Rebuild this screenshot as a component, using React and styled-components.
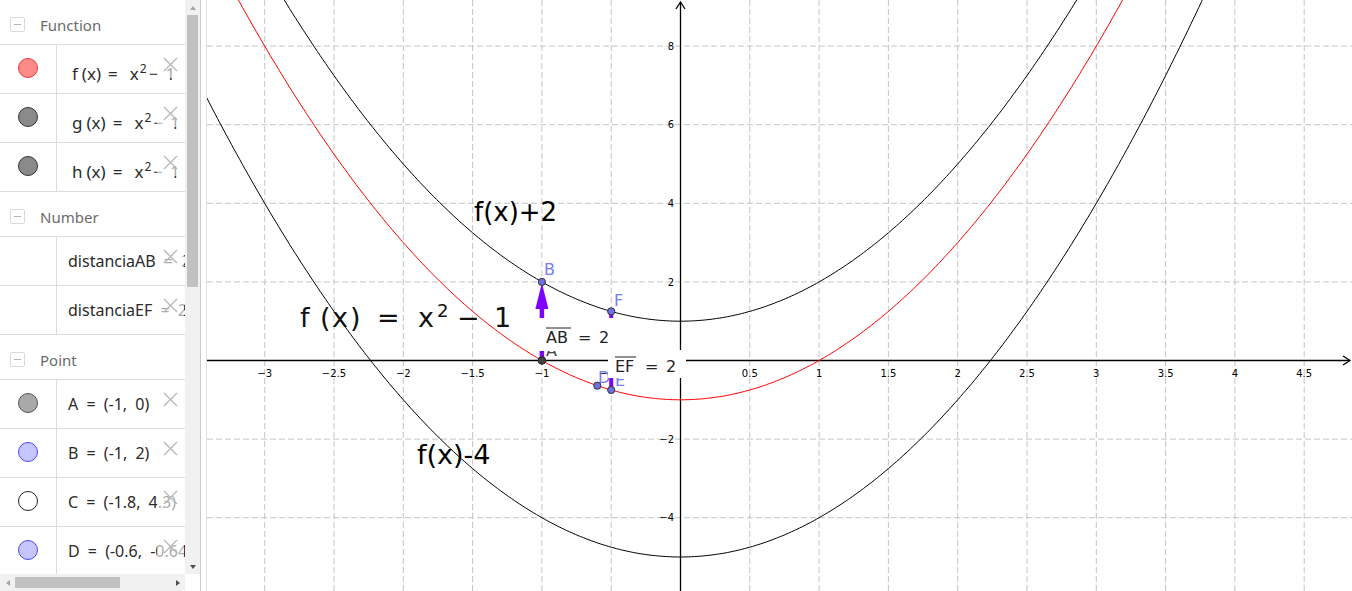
import React from 'react';
import styled, { createGlobalStyle } from 'styled-components';

const GlobalStyle = createGlobalStyle`
  html, body { margin: 0; padding: 0; background: #fff; overflow: hidden; }
  #root { width: 1352px; height: 591px; }
`;

const Page = styled.div`
  display: flex;
  width: 1352px;
  height: 591px;
  font-family: "Noto Sans", "DejaVu Sans", sans-serif;
  background: #fff;
`;

const AlgebraPanel = styled.div`
  flex: none;
  width: 201px;
  box-sizing: border-box;
  border-right: 1px solid #c9c9c9;
  display: grid;
  grid-template-columns: 185px 15px;
  grid-template-rows: 574px 17px;
`;

const AlgebraContent = styled.div`
  overflow: hidden;
`;

const AlgebraList = styled.div`
  width: 185px;
`;

const GroupHeader = styled.div`
  height: 45px;
  box-sizing: border-box;
  border-bottom: 1px solid #dcdcdc;
  display: flex;
  align-items: center;
  padding: 5px 0 0 10px;
`;

const CollapseIcon = styled.div`
  width: 15px;
  height: 15px;
  box-sizing: border-box;
  border: 1px solid #dadada;
  border-radius: 2px;
  display: flex;
  align-items: center;
  justify-content: center;
  margin-right: 15px;
  &::after {
    content: "";
    width: 7px;
    height: 1px;
    background: #b4b4b4;
  }
`;

const GroupTitle = styled.span`
  font-size: 15px;
  color: #6b6b6b;
`;

const Row = styled.div`
  position: relative;
  height: 49px;
  box-sizing: border-box;
  border-bottom: 1px solid #dcdcdc;
  display: flex;
  overflow: hidden;
`;

const MarbleCell = styled.div`
  flex: none;
  width: 57px;
  box-sizing: border-box;
  border-right: 1px solid #dcdcdc;
  display: flex;
  align-items: center;
  justify-content: center;
  padding-bottom: 3px;
`;

const Marble = styled.div`
  width: 20px;
  height: 20px;
  box-sizing: border-box;
  border-radius: 50%;
  border: 1px solid ${p => p.$border};
  background: ${p => p.$fill};
`;

const RowText = styled.div`
  display: flex;
  align-items: center;
  padding-left: ${p => (p.$math ? 15 : 11)}px;
  padding-top: ${p => (p.$math ? 8 : 0)}px;
  font-size: ${p => (p.$math ? 17 : 16)}px;
  word-spacing: 4px;
  color: #2b2b2b;
  white-space: pre;
`;

const MathPiece = styled.span`
  margin-left: ${p => p.$gap || 0}px;
  word-spacing: normal;
`;

const Sup = styled.span`
  font-size: 12px;
  position: relative;
  top: -7px;
  margin-left: 1px;
`;

const DeleteButton = styled.div`
  position: absolute;
  left: 157px;
  top: 6px;
  width: 27px;
  height: 27px;
  background: rgba(255, 255, 255, 0.6);
  display: flex;
  align-items: center;
  justify-content: center;
`;

const VScroll = styled.div`
  background: #f1f1f1;
  display: flex;
  flex-direction: column;
  align-items: center;
`;

const HScroll = styled.div`
  background: #f1f1f1;
  display: flex;
  align-items: center;
`;

const ScrollCorner = styled.div`
  background: #fff;
`;

const ArrowBox = styled.div`
  flex: none;
  width: 15px;
  height: 15px;
  display: flex;
  align-items: center;
  justify-content: center;
`;

const Tri = styled.div`
  width: 0;
  height: 0;
  ${p => p.$dir === 'up' && `border-left:3.5px solid transparent;border-right:3.5px solid transparent;border-bottom:4px solid ${p.$c};`}
  ${p => p.$dir === 'down' && `border-left:3.5px solid transparent;border-right:3.5px solid transparent;border-top:4px solid ${p.$c};`}
  ${p => p.$dir === 'left' && `border-top:3.5px solid transparent;border-bottom:3.5px solid transparent;border-right:4px solid ${p.$c};`}
  ${p => p.$dir === 'right' && `border-top:3.5px solid transparent;border-bottom:3.5px solid transparent;border-left:4px solid ${p.$c};`}
`;

const VThumb = styled.div`
  flex: none;
  width: 11px;
  height: 272px;
  background: #c1c1c1;
`;

const HThumb = styled.div`
  flex: none;
  width: 105px;
  height: 11px;
  background: #c1c1c1;
`;

const Spacer = styled.div`
  flex: 1;
`;

const Divider = styled.div`
  flex: none;
  width: 6px;
  box-sizing: border-box;
  background: #fff;
  border-right: 1px solid #e2e2e2;
`;

const GraphicsView = styled.div`
  flex: 1;
  overflow: hidden;
  background: #fff;
`;

const GraphSvg = styled.svg`
  display: block;
`;

/* ---------- algebra data ---------- */

const CloseIcon = () => (
  <svg width="15" height="15" viewBox="0 0 15 15">
    <path d="M1 1 L14 14 M14 1 L1 14" stroke="#b8b8b8" strokeWidth="1.4" fill="none" />
  </svg>
);

const MathFn = ({ name, tail }) => (
  <>
    <MathPiece>{name}</MathPiece>
    <MathPiece $gap={4}>(x)</MathPiece>
    <MathPiece $gap={7}>=</MathPiece>
    <MathPiece $gap={12}>x<Sup>2</Sup></MathPiece>
    <MathPiece $gap={2}>−</MathPiece>
    <MathPiece $gap={7}>1{tail}</MathPiece>
  </>
);

const groups = [
  {
    title: 'Function',
    rows: [
      { fill: '#ff8a8a', border: '#e23b3b', math: true, content: <MathFn name="f" tail="" /> },
      { fill: '#8a8a8a', border: '#333', math: true, content: <MathFn name="g" tail=" + 2" /> },
      { fill: '#8a8a8a', border: '#333', math: true, content: <MathFn name="h" tail=" − 4" /> },
    ],
  },
  {
    title: 'Number',
    rows: [
      { content: 'distanciaAB = 2' },
      { content: 'distanciaEF = 2' },
    ],
  },
  {
    title: 'Point',
    rows: [
      { fill: '#a9a9a9', border: '#555', content: 'A = (-1, 0)' },
      { fill: '#c6c6ff', border: '#4a4ae6', content: 'B = (-1, 2)' },
      { fill: '#ffffff', border: '#222', content: 'C = (-1.8, 4.3)' },
      { fill: '#c6c6ff', border: '#4a4ae6', content: 'D = (-0.6, -0.64)' },
    ],
  },
];

/* ---------- graph helpers ---------- */

const X = x => 680.5 + 138.6 * x;
const Y = y => 360.5 - 39.3 * y;

const parabola = c => {
  let d = '';
  for (let i = 0; i <= 420; i++) {
    const x = -3.6 + i * 0.02;
    d += (i ? 'L' : 'M') + X(x).toFixed(1) + ' ' + Y(x * x + c).toFixed(1);
  }
  return d;
};

const fmt = v => (v < 0 ? '−' + String(-v) : String(v));

const xTicks = [];
for (let k = -6; k <= 9; k++) if (k !== 0) xTicks.push(k * 0.5);
const yTicks = [-4, -2, 2, 4, 6, 8];

const FONT = '"DejaVu Sans", sans-serif';
const PURPLE = '#7f00ff';
const POINT_BLUE = '#6f6fe6';
const LABEL_BLUE = '#7b7bf2';

const Graph = () => (
  <GraphSvg width="1145" height="591" viewBox="207 0 1145 591">
    {/* grid */}
    <g stroke="#c4c4c4" strokeWidth="1" strokeDasharray="6 3" fill="none">
      {xTicks.map(v => (
        <line key={'gx' + v} x1={X(v)} y1="0" x2={X(v)} y2="591" />
      ))}
      {yTicks.map(v => (
        <line key={'gy' + v} x1="207" y1={Y(v)} x2="1352" y2={Y(v)} />
      ))}
    </g>

    {/* axes */}
    <g stroke="#000" strokeWidth="1.3" fill="none">
      <line x1="207" y1={Y(0)} x2="1350" y2={Y(0)} />
      <path d={`M1343 ${Y(0) - 4.5} L1350 ${Y(0)} L1343 ${Y(0) + 4.5}`} />
      <line x1="680.5" y1="591" x2="680.5" y2="2" />
      <path d="M676 9 L680.5 2 L685 9" />
    </g>

    {/* tick labels */}
    <g fontFamily={FONT} fontSize="10" fill="#000">
      {xTicks.map(v => (
        <text key={'tx' + v} x={X(v)} y="377" textAnchor="middle">{fmt(v)}</text>
      ))}
      {yTicks.map(v => (
        <text key={'ty' + v} x="674" y={Y(v) + 3.6} textAnchor="end">{fmt(v)}</text>
      ))}
    </g>

    {/* curves */}
    <g fill="none" strokeWidth="1">
      <path d={parabola(1)} stroke="#000" />
      <path d={parabola(-5)} stroke="#000" />
      <path d={parabola(-1)} stroke="#ff0000" />
    </g>

    {/* vectors */}
    <line x1={X(-1)} y1={Y(0)} x2={X(-1)} y2={Y(2) + 24} stroke={PURPLE} strokeWidth="4.5" />
    <path d={`M${X(-1)} ${Y(2) + 1} L${X(-1) - 6.5} ${Y(2) + 27} L${X(-1) + 6.5} ${Y(2) + 27} Z`} fill={PURPLE} />
    <line x1={X(-0.5)} y1={Y(1.25)} x2={X(-0.5)} y2={Y(-0.75)} stroke={PURPLE} strokeWidth="4" />

    {/* partially hidden labels */}
    <text x="546" y="356" fontFamily={FONT} fontSize="16" fill="#444">A</text>
    <text x="598" y="383" fontFamily={FONT} fontSize="16" fill={LABEL_BLUE}>D</text>
    <text x="615" y="386" fontFamily={FONT} fontSize="16" fill={LABEL_BLUE}>E</text>

    {/* distance labels with background */}
    <rect x="539" y="318" width="76" height="33" fill="#fff" />
    <g fontFamily={FONT} fontSize="16" fill="#222">
      <text y="343">
        <tspan x="546">AB</tspan>
        <tspan x="578">=</tspan>
        <tspan x="599">2</tspan>
      </text>
    </g>
    <line x1="546" y1="328" x2="571" y2="328" stroke="#222" strokeWidth="1" />

    <rect x="608" y="350" width="78" height="28" fill="#fff" />
    <g fontFamily={FONT} fontSize="16" fill="#222">
      <text y="372">
        <tspan x="615">EF</tspan>
        <tspan x="645">=</tspan>
        <tspan x="666">2</tspan>
      </text>
    </g>
    <line x1="615" y1="357" x2="636" y2="357" stroke="#222" strokeWidth="1" />

    {/* curve captions */}
    <text x="474" y="221" fontFamily={FONT} fontSize="26" fill="#000">f(x)+2</text>
    <text x="417" y="464" fontFamily={FONT} fontSize="27" fill="#000">f(x)-4</text>
    <text y="327" fontFamily={FONT} fontSize="27" fill="#111">
      <tspan x="300">f</tspan>
      <tspan x="320">(</tspan>
      <tspan x="332">x</tspan>
      <tspan x="350">)</tspan>
      <tspan x="377">=</tspan>
      <tspan x="418">x</tspan>
      <tspan x="437" dy="-10" fontSize="18">2</tspan>
      <tspan x="457" dy="10">−</tspan>
      <tspan x="494">1</tspan>
    </text>

    {/* point labels */}
    <text x="544" y="275" fontFamily={FONT} fontSize="16" fill={LABEL_BLUE}>B</text>
    <text x="614" y="306" fontFamily={FONT} fontSize="16" fill={LABEL_BLUE}>F</text>

    {/* points */}
    <circle cx={X(-1)} cy={Y(0)} r="3.8" fill="#444" stroke="#222" strokeWidth="1" />
    <circle cx={X(-1)} cy={Y(2)} r="3.6" fill={POINT_BLUE} stroke="#333" strokeWidth="1" />
    <circle cx={X(-0.5)} cy={Y(1.25)} r="3.6" fill={POINT_BLUE} stroke="#333" strokeWidth="1" />
    <circle cx={X(-0.6)} cy={Y(-0.64)} r="3.6" fill={POINT_BLUE} stroke="#333" strokeWidth="1" />
    <circle cx={X(-0.5)} cy={Y(-0.75)} r="3.6" fill={POINT_BLUE} stroke="#333" strokeWidth="1" />
  </GraphSvg>
);

export default function App() {
  return (
    <>
      <GlobalStyle />
      <Page>
        <AlgebraPanel>
          <AlgebraContent>
            <AlgebraList>
              {groups.map(g => (
                <React.Fragment key={g.title}>
                  <GroupHeader>
                    <CollapseIcon />
                    <GroupTitle>{g.title}</GroupTitle>
                  </GroupHeader>
                  {g.rows.map((r, i) => (
                    <Row key={i}>
                      <MarbleCell>
                        {r.fill && <Marble $fill={r.fill} $border={r.border} />}
                      </MarbleCell>
                      <RowText $math={r.math}>{r.content}</RowText>
                      <DeleteButton>
                        <CloseIcon />
                      </DeleteButton>
                    </Row>
                  ))}
                </React.Fragment>
              ))}
            </AlgebraList>
          </AlgebraContent>
          <VScroll>
            <ArrowBox><Tri $dir="up" $c="#a3a3a3" /></ArrowBox>
            <VThumb />
            <Spacer />
            <ArrowBox><Tri $dir="down" $c="#505050" /></ArrowBox>
          </VScroll>
          <HScroll>
            <ArrowBox><Tri $dir="left" $c="#a3a3a3" /></ArrowBox>
            <HThumb />
            <Spacer />
            <ArrowBox><Tri $dir="right" $c="#505050" /></ArrowBox>
          </HScroll>
          <ScrollCorner />
        </AlgebraPanel>
        <Divider />
        <GraphicsView>
          <Graph />
        </GraphicsView>
      </Page>
    </>
  );
}
